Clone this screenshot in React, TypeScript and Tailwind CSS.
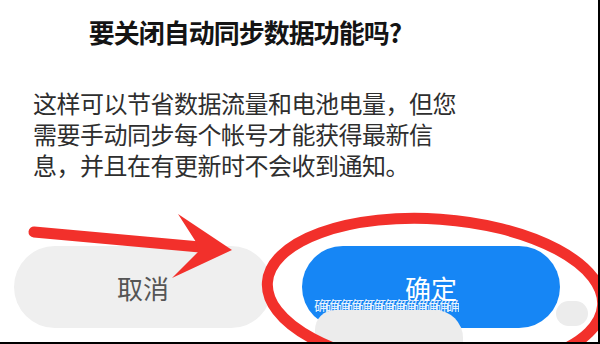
import React from "react"

const cjk = { fontFamily: '"Noto Sans CJK SC", "Noto Sans", sans-serif' }

function Annotations() {
  return (
    <svg className="absolute inset-0 pointer-events-none" width="600" height="344" viewBox="0 0 600 344">
      {/* arrow shaft */}
      <line x1="34" y1="232" x2="200" y2="247" stroke="#f2302b" strokeWidth="11" strokeLinecap="round" />
      {/* arrow head */}
      <polygon points="178,214 232,250 172,278 198,252 196,242" fill="#f2302b" />
      {/* circle round the confirm button */}
      <ellipse
        cx="435"
        cy="294"
        rx="168"
        ry="75"
        transform="rotate(4 435 294)"
        fill="none"
        stroke="#f2302b"
        strokeWidth="11"
      />
    </svg>
  )
}

function Smear() {
  return (
    <>
      <div className="absolute left-[314px] top-[298px] w-[150px] h-[14px] overflow-hidden text-white text-[14px] leading-[14px] tracking-[-3px] opacity-90" style={cjk}>
        确确确确确确确确确确确确确确确确
      </div>
      <div className="absolute left-[315px] top-[310px] w-[148px] h-[40px] rounded-tl-[20px] rounded-tr-[28px] bg-[#ececec]" />
      <div className="absolute left-[556px] top-[301px] w-[32px] h-[25px] rounded-[14px] bg-[#ececec]" />
    </>
  )
}

export default function App() {
  return (
    <div className="relative w-[600px] h-[344px] overflow-hidden bg-white border-r-2 border-b-2 border-black" style={cjk}>
      <div className="flex flex-col">
        <div className="w-[426px] ml-[32px] pt-[14px] text-center text-[26px] leading-[36px] font-bold tracking-[-1px] text-[#141414]">
          要关闭自动同步数据功能吗?
        </div>
        <div className="ml-[33px] mt-[37px] text-[24px] leading-[31px] tracking-[-0.5px] text-[#2e2e2e]">
          <div>这样可以节省数据流量和电池电量，但您</div>
          <div>需要手动同步每个帐号才能获得最新信</div>
          <div>息，并且在有更新时不会收到通知。</div>
        </div>
        <div className="flex gap-[30px] pl-[14px] mt-[66px]">
          <button className="w-[258px] h-[82px] rounded-full bg-[#efefef] text-[26px] text-[#555555]">取消</button>
          <button className="w-[258px] h-[82px] rounded-full bg-[#1686f5] text-[26px] text-white">确定</button>
        </div>
      </div>
      <Smear />
      <Annotations />
    </div>
  )
}
